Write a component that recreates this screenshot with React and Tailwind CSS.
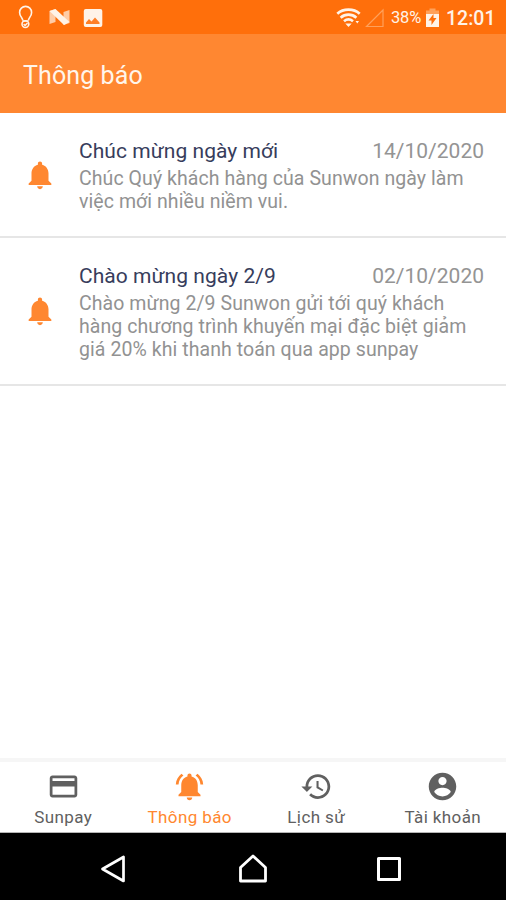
const BELL = "M12 22c1.1 0 2-.9 2-2h-4c0 1.1.89 2 2 2zm6-6v-5c0-3.07-1.64-5.64-4.5-6.32V4c0-.83-.67-1.5-1.5-1.5s-1.5.67-1.5 1.5v.68C7.63 5.36 6 7.92 6 11v5l-2 2v1h16v-1l-2-2z";

function StatusBar() {
  return (
    <header className="flex h-[34px] shrink-0 items-center bg-[#ff6f0b] text-[#fff3e8]">
      <svg className="ml-[17px] h-6 w-[17px]" viewBox="0 0 17 24" fill="none" stroke="currentColor" strokeWidth="1.6">
        <path d="M5.8 15.5C5.5 12.5 2.6 11.300 2.600 7.400a6 6 0 0 1 12 0c0 3.900-2.900 5.100-3.200 8.100" />
        <circle cx="8.400" cy="19.100" r="3.400" />
        <path d="M5.500 16h6M6.600 19.200l1.500 1.300 2.400-2.500" />
      </svg>
      <svg className="ml-[15px] h-[18px] w-[21px]" viewBox="0 0 21 18" fill="currentColor">
        <path opacity=".7" d="M0.500 3l6-2v13l-6 2zM14.500 4l6-2v13l-6 2z" />
        <path d="M0.500 3l6-2 14 13-5.500 3z" />
      </svg>
      <svg className="ml-[13px] mt-px h-5 w-5" viewBox="0 0 20 20">
        <rect x="0.800" y="1" width="18.500" height="18" rx="2" fill="currentColor" />
        <path d="M3 16v-1.500l3-3.500 2.500 2.500 3.500-4 4.500 5v1.500z" fill="#ff7f27" />
      </svg>
      <div className="flex-1" />
      <svg className="h-[21px] w-[25px]" viewBox="0 0 25 21" fill="none" stroke="currentColor" strokeWidth="2.700">
        <path d="M1.300 6.700c6-5.500 16.400-5.500 22.400 0M4.600 10.700c4.600-4 11.200-4 15.800 0M8 14.300c2.700-2.200 6.300-2.200 9 0" />
        <path d="M9.300 16.400h6.400L12.500 20zM19.500 14h3.500l-1.700 2.500z" fill="currentColor" stroke="none" />
      </svg>
      <svg className="ml-1 mt-[2px] h-5 w-5" viewBox="0 0 20 20" fill="none" stroke="#ffa05a" strokeWidth="1.200">
        <path d="M1.500 18.500h16.500v-16.500z" />
      </svg>
      <span className="ml-[6px] w-[31px] whitespace-nowrap pt-[3px] font-['Roboto',sans-serif] text-[16.5px] tracking-[-0.2px]">38%</span>
      <svg className="ml-[3px] h-[21px] w-[15px]" viewBox="0 0 15 21">
        <path d="M1 7V3.500h3.500V1.500h6v2H14V7z" fill="#ffa15a" />
        <path d="M1 7h13v13H1z" fill="currentColor" />
        <path d="M8.500 7v4h3L6.500 18v-4.500h-3z" fill="#ff6f0b" />
      </svg>
      <span className="ml-[6px] mr-[10px] w-[50px] whitespace-nowrap pt-[4px] font-['Roboto',sans-serif] text-[19.5px] font-medium">12:01</span>
    </header>
  );
}

function Notice({ title, date, lines, row }) {
  return (
    <article className={`flex shrink-0 border-b-2 border-[#e6e6e6] ${row}`}>
      <div className="flex w-[79px] shrink-0 items-center">
        <svg className="ml-[23px] h-[34px] w-[34px]" viewBox="0 0 24 24" fill="#ff8730">
          <path d={BELL} />
        </svg>
      </div>
      <div className="flex-1 pr-[22px] pt-[23px]">
        <div className="flex h-[31px] items-center justify-between whitespace-nowrap">
          <h2 className="text-[21px] tracking-[0.05px] text-[#373d5c]">{title}</h2>
          <time className="text-[21px] text-[#949494]">{date}</time>
        </div>
        {lines.map((line) => (
          <p key={line} className="h-[23px] whitespace-nowrap text-[19.5px] leading-[23px] tracking-[0.07px] text-[#929292]">{line}</p>
        ))}
      </div>
    </article>
  );
}

function Tab({ label, active, children }) {
  return (
    <div className={`flex flex-1 flex-col items-center ${active ? "text-[#ff872f]" : "text-[#606060]"}`}>
      <svg className="mt-[8px] h-[33px] w-[33px]" viewBox="0 0 24 24" fill="currentColor">{children}</svg>
      <span className="mt-[3px] whitespace-nowrap text-[17px] leading-[22px] tracking-[0.4px]">{label}</span>
    </div>
  );
}

export default function App() {
  return (
    <main className="flex h-[900px] w-[506px] flex-col overflow-hidden bg-white font-['Roboto',sans-serif]">
      <StatusBar />
      <div className="flex h-[79px] shrink-0 items-center bg-[#ff8731] pl-[23px]">
        <h1 className="pt-[5px] text-[25px] leading-[30px] tracking-[0.1px] text-[#fff5ea]">Thông báo</h1>
      </div>
      <Notice row="h-[125px]" title="Chúc mừng ngày mới" date="14/10/2020" lines={["Chúc Quý khách hàng của Sunwon ngày làm", "việc mới nhiều niềm vui."]} />
      <Notice row="h-[148px]" title="Chào mừng ngày 2/9" date="02/10/2020" lines={["Chào mừng 2/9 Sunwon gửi tới quý khách", "hàng chương trình khuyến mại đặc biệt giảm", "giá 20% khi thanh toán qua app sunpay"]} />
      <div className="flex-1" />
      <nav className="flex h-[75px] shrink-0 border-b border-t-4 border-b-[#b5b5b5] border-t-[#f6f6f6]">
        <Tab label="Sunpay">
          <path d="M20 4H4c-1.110 0-1.990.890-1.990 2L2 18c0 1.110.890 2 2 2h16c1.110 0 2-.890 2-2V6c0-1.110-.890-2-2-2zm0 14H4v-6h16v6zm0-10H4V6h16v2z" />
        </Tab>
        <Tab label="Thông báo" active>
          <path d="M7.580 4.080L6.150 2.650C3.750 4.480 2.170 7.300 2.030 10.500h2c.150-2.650 1.510-4.970 3.550-6.420zm12.390 6.420h2c-.150-3.200-1.730-6.020-4.120-7.850l-1.420 1.430c2.020 1.450 3.390 3.770 3.540 6.420z" />
          <path d={BELL} />
        </Tab>
        <Tab label="Lịch sử">
          <path d="M13 3c-4.970 0-9 4.030-9 9H1l3.890 3.890.07.14L9 12H6c0-3.870 3.130-7 7-7s7 3.130 7 7-3.130 7-7 7c-1.930 0-3.680-.79-4.940-2.060l-1.420 1.420C8.270 19.990 10.510 21 13 21c4.970 0 9-4.030 9-9s-4.030-9-9-9zm-1 5v5l4.280 2.540.72-1.210-3.500-2.080V8H12z" />
        </Tab>
        <Tab label="Tài khoản">
          <path d="M12 2C6.480 2 2 6.480 2 12s4.480 10 10 10 10-4.480 10-10S17.520 2 12 2zm0 3c1.660 0 3 1.340 3 3s-1.340 3-3 3-3-1.340-3-3 1.340-3 3-3zm0 14.200c-2.500 0-4.710-1.280-6-3.220.030-1.990 4-3.080 6-3.080 1.990 0 5.970 1.090 6 3.080-1.290 1.940-3.500 3.220-6 3.220z" />
        </Tab>
      </nav>
      <footer className="flex h-[67px] shrink-0 items-center justify-between bg-black pl-[99px] pr-[104px] pt-[4px]">
        <svg className="h-8 w-7" viewBox="0 0 28 32" fill="none" stroke="white" strokeWidth="2.700" strokeLinejoin="round">
          <path d="M24.500 4v24L3.500 16z" />
        </svg>
        <svg className="ml-[2px] h-8 w-8" viewBox="0 0 32 32" fill="none" stroke="white" strokeWidth="2.800" strokeLinejoin="round">
          <path d="M3.500 28V14.500L16 3l12.500 11.500V28z" />
        </svg>
        <svg className="h-[26px] w-[26px]" viewBox="0 0 26 26" fill="none" stroke="white" strokeWidth="3" strokeLinejoin="round">
          <rect x="2.500" y="2.500" width="21" height="21" />
        </svg>
      </footer>
    </main>
  );
}
